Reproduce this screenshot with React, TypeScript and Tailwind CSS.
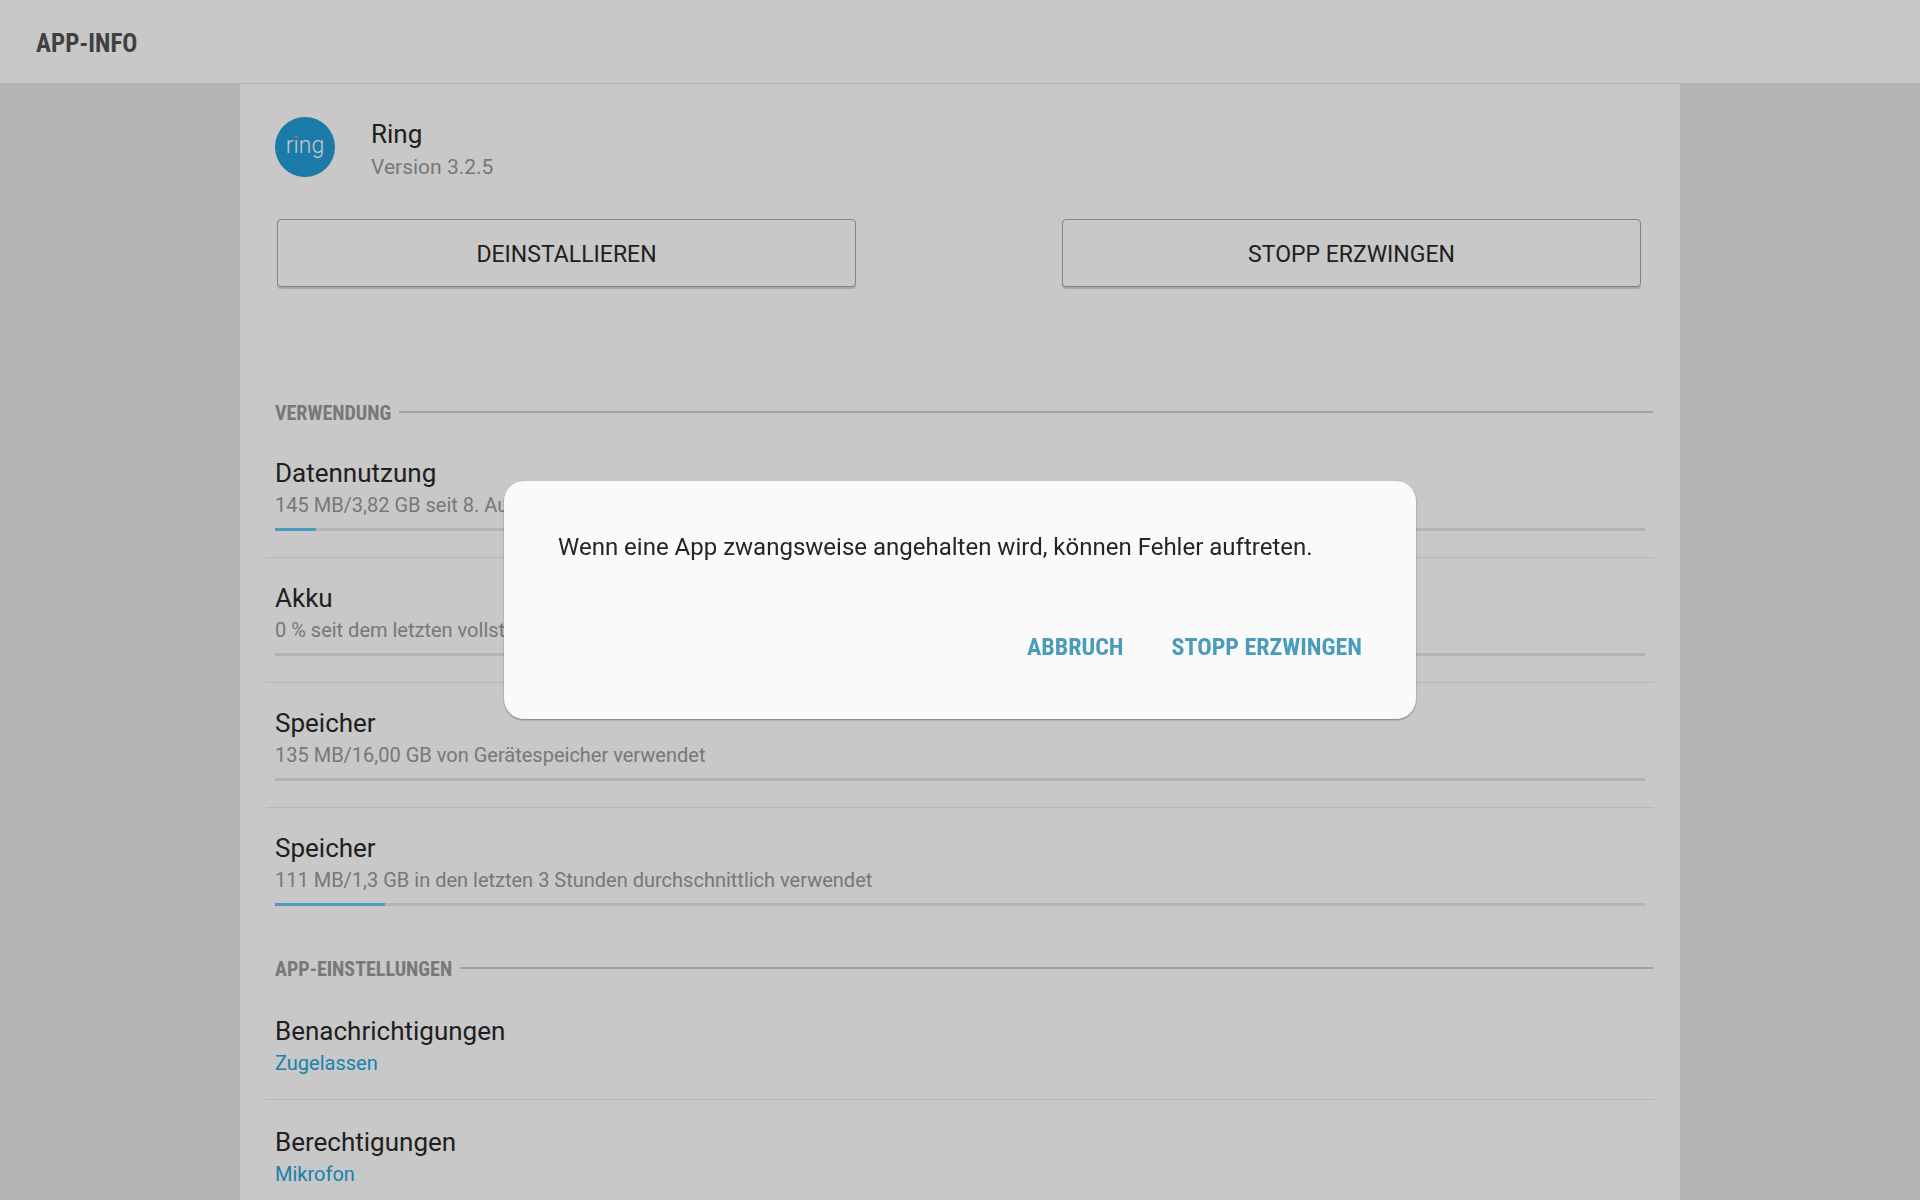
import React from 'react'

type UsageItem = {
    title: string
    detail: string
    percent: number
}

type SettingItem = {
    title: string
    value: string
}

const usage: UsageItem[] = [
    { title: 'Datennutzung', detail: '145 MB/3,82 GB seit 8. Aug. verwendet', percent: 3 },
    { title: 'Akku', detail: '0 % seit dem letzten vollständigen Aufladen verbraucht', percent: 0 },
    { title: 'Speicher', detail: '135 MB/16,00 GB von Gerätespeicher verwendet', percent: 0 },
    { title: 'Speicher', detail: '111 MB/1,3 GB in den letzten 3 Stunden durchschnittlich verwendet', percent: 8 },
]

const settings: SettingItem[] = [
    { title: 'Benachrichtigungen', value: 'Zugelassen' },
    { title: 'Berechtigungen', value: 'Mikrofon' },
]

const RingLogo = () => (
    <svg viewBox="0 0 60 60" className="size-[60px] shrink-0" role="img" aria-label="Ring">
        <circle cx="30" cy="30" r="30" fill="#2299d3" />
        <text x="30" y="36" textAnchor="middle" fill="#f4f8fa" className="font-['Roboto'] text-[23px] font-light">ring</text>
        <circle cx="21.1" cy="20" r="1.6" fill="#b98a72" />
    </svg>
)

const SectionTitle = ({ children }: { children: React.ReactNode }) => (
    <div className="h-14 pt-5 pl-[35px] pr-[27px] flex items-start gap-2">
        <h2 className="font-['Roboto_Condensed','Roboto',sans-serif] text-[20px] leading-8 font-bold text-[#969696] uppercase">{children}</h2>
        <div className="mt-[14px] h-[2px] flex-1 bg-[#cbcbcb]"></div>
    </div>
)

const ActionButton = ({ children }: { children: React.ReactNode }) => (
    <button className="flex-1 h-[68px] pt-1 rounded-[4px] border border-[#a4a4a4] bg-[#fafafa] text-[23px] leading-8 shadow-[0_2px_1px_#d0d0d0]">
        {children}
    </button>
)

const UsageRow = ({ item }: { item: UsageItem }) => (
    <li className="h-[125px] px-[9px] pt-6 border-b border-[#e4e4e4] last:border-b-0">
        <h3 className="text-[26px] leading-8">{item.title}</h3>
        <p className="text-[20px] leading-8 text-[#969696]">{item.detail}</p>
        <div className="mt-[7px] h-[3px] bg-[#e1e1e1]" role="progressbar" aria-label={item.title} aria-valuenow={item.percent}>
            <div className="h-full bg-[#5dc3e6]" style={{ width: `${item.percent}%` }}></div>
        </div>
    </li>
)

const SettingRow = ({ item }: { item: SettingItem }) => (
    <li className="h-[111px] px-[9px] pt-[26px] border-b border-[#e4e4e4] last:border-b-0">
        <h3 className="text-[26px] leading-8">{item.title}</h3>
        <p className="text-[20px] leading-8 text-[#24a3d8]">{item.value}</p>
    </li>
)

const ForceStopDialog = () => (
    <div className="fixed inset-0 flex items-center justify-center bg-black/20">
        <div role="alertdialog" aria-labelledby="dialog-text" className="w-full max-w-[912px] rounded-[20px] bg-[#fafafa] px-[54px] pt-[50px] pb-14 shadow-[0_1px_2px_#00000066]">
            <p id="dialog-text" className="text-[24px] leading-8 text-[#252525]">Wenn eine App zwangsweise angehalten wird, können Fehler auftreten.</p>
            <div className="mt-[68px] flex justify-end gap-12 font-['Roboto_Condensed','Roboto',sans-serif] text-[24px] leading-8 font-bold text-[#4a9cb9]">
                <button>ABBRUCH</button>
                <button>STOPP ERZWINGEN</button>
            </div>
        </div>
    </div>
)

const App = () => {
    return (
        <div className="h-screen overflow-hidden flex flex-col bg-[#e1e1e1] font-['Roboto',sans-serif] text-[#282828]">
            <header className="h-[84px] shrink-0 flex items-center px-9 pt-1 border-b border-[#e1e1e1] bg-[#fafafa]">
                <h1 className="font-['Roboto_Condensed','Roboto',sans-serif] text-[25px] leading-8 font-bold text-[#505050]">APP-INFO</h1>
            </header>

            <main className="w-3/4 mx-auto flex-1 min-h-0 overflow-hidden bg-[#fafafa]">
                <div className="flex items-start gap-9 px-[35px] pt-[33px]">
                    <RingLogo />
                    <div className="pt-px">
                        <h2 className="text-[26px] leading-8">Ring</h2>
                        <p className="text-[21px] leading-[34px] text-[#969696]">Version 3.2.5</p>
                    </div>
                </div>

                <div className="mt-[35px] mb-[90px] pl-[37px] pr-[39px] flex gap-[206px]">
                    <ActionButton>DEINSTALLIEREN</ActionButton>
                    <ActionButton>STOPP ERZWINGEN</ActionButton>
                </div>

                <section>
                    <SectionTitle>Verwendung</SectionTitle>
                    <ul className="mx-[26px]">
                        {usage.map((item, i) => <UsageRow key={i} item={item} />)}
                    </ul>
                </section>

                <section>
                    <SectionTitle>App-Einstellungen</SectionTitle>
                    <ul className="mx-[26px]">
                        {settings.map((item) => <SettingRow key={item.title} item={item} />)}
                    </ul>
                </section>
            </main>

            <ForceStopDialog />
        </div>
    )
}

export default App
